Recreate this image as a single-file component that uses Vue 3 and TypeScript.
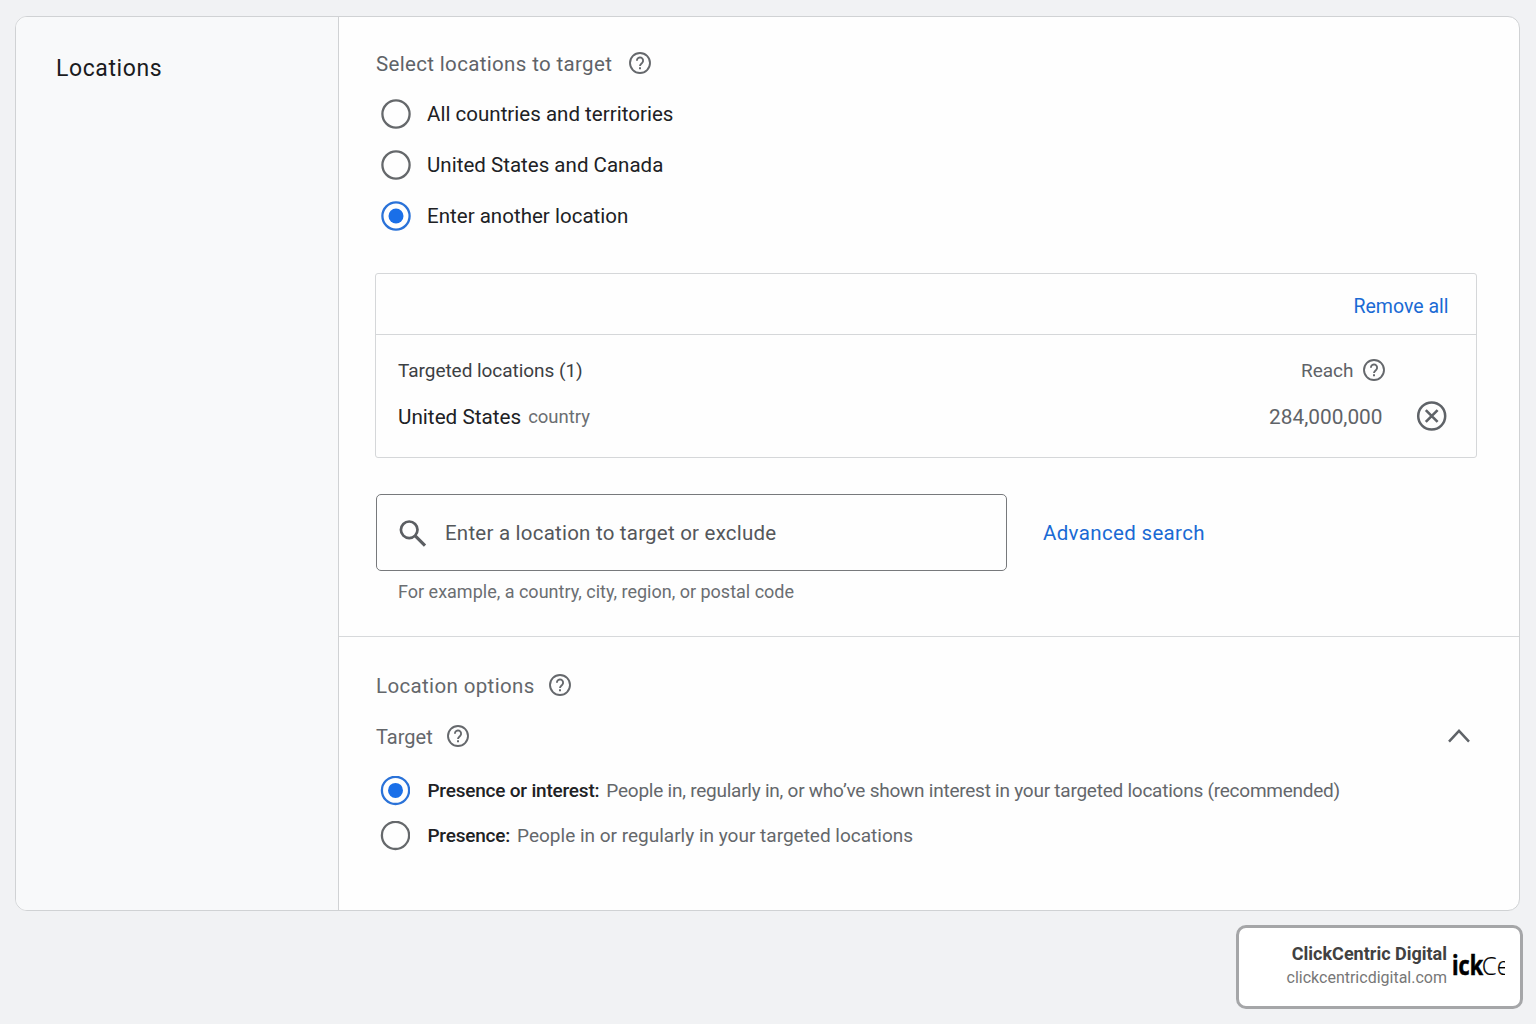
<script setup lang="ts">
import { defineComponent, h, ref } from 'vue'

interface Place { id: string; label: string }
interface Mode { id: string; title: string; text: string; cls: string }

const places: Place[] = [
  { id: 'all', label: 'All countries and territories' },
  { id: 'usca', label: 'United States and Canada' },
  { id: 'other', label: 'Enter another location' },
]
const modes: Mode[] = [
  {
    id: 'interest',
    title: 'Presence or interest:',
    text: 'People in, regularly in, or who’ve shown interest in your targeted locations (recommended)',
    cls: 'm-interest',
  },
  { id: 'presence', title: 'Presence:', text: 'People in or regularly in your targeted locations', cls: 'm-presence' },
]
const place = ref('other')
const mode = ref('interest')

const HelpIcon = defineComponent({
  render: () =>
    h('svg', { width: 24, height: 24, viewBox: '0 0 24 24', fill: 'none', stroke: '#65686c', 'stroke-width': 1.9 }, [
      h('circle', { cx: 12, cy: 12, r: 10 }),
      h('path', { d: 'M8.9 9.7a3.1 3.1 0 1 1 5.3 2.1c-1 1-2.2 1.5-2.2 3.3' }),
      h('path', { d: 'M12 16.3v2', 'stroke-width': 2 }),
    ]),
})
</script>

<template>
  <div class="page">
    <main class="card">
      <aside class="side"><h1>Locations</h1></aside>
      <div class="content">
        <section class="targeting">
          <div class="row heading"><span class="t-select">Select locations to target</span><HelpIcon class="help" /></div>
          <div class="places">
            <label v-for="p in places" :key="p.id" class="row option" @click="place = p.id">
              <svg class="radio" :class="{ on: place === p.id }" width="30" height="30" viewBox="0 0 30 30">
                <circle class="ring" cx="15" cy="15" r="13.6" />
                <circle v-if="place === p.id" class="dot" cx="15" cy="15" r="7.5" />
              </svg>
              <span>{{ p.label }}</span>
            </label>
          </div>

          <div class="table">
            <div class="table-top"><a class="t-remove">Remove all</a></div>
            <div class="table-body">
              <div class="row line">
                <span class="t-targeted">Targeted locations (1)</span>
                <span class="reach"><span class="t-reach">Reach</span><HelpIcon class="help" /></span>
              </div>
              <div class="row line">
                <span class="t-us">United States</span><span class="t-country">country</span>
                <span class="t-num">284,000,000</span>
                <svg class="remove" width="32" height="32" viewBox="0 0 32 32" fill="none" stroke="#5f6368">
                  <circle cx="15.7" cy="16" r="13.5" stroke-width="2.5" />
                  <path d="M9.8 10.1l11.8 11.8M21.6 10.1L9.8 21.9" stroke-width="2.6" />
                </svg>
              </div>
            </div>
          </div>

          <div class="row search-row">
            <div class="row search">
              <svg width="28" height="28" viewBox="0 0 28 28" fill="none" stroke="#5b5e62">
                <circle cx="10.2" cy="10.8" r="8.3" stroke-width="2.7" />
                <path d="M16 16.6l10 10" stroke-width="3.2" />
              </svg>
              <span class="t-search">Enter a location to target or exclude</span>
            </div>
            <a class="t-adv">Advanced search</a>
          </div>
          <div class="hint">For example, a country, city, region, or postal code</div>
        </section>

        <section class="options">
          <div class="row opt-title"><span class="t-options">Location options</span><HelpIcon class="help" /></div>
          <div class="row opt-target">
            <span class="t-target">Target</span><HelpIcon class="help" />
            <svg class="chev" width="24" height="16" viewBox="0 0 24 16" fill="none" stroke="#5f6368" stroke-width="2.5">
              <path d="M2 12.6L12 1.9l10 10.7" />
            </svg>
          </div>
          <div class="modes">
            <label v-for="m in modes" :key="m.id" class="row option" :class="m.cls" @click="mode = m.id">
              <svg class="radio" :class="{ on: mode === m.id }" width="30" height="30" viewBox="0 0 30 30">
                <circle class="ring" cx="15.5" cy="14.4" r="13.6" />
                <circle v-if="mode === m.id" class="dot" cx="15.5" cy="14.4" r="7.5" />
              </svg>
              <b>{{ m.title }}</b><span class="desc">{{ m.text }}</span>
            </label>
          </div>
        </section>
      </div>
    </main>

    <footer class="badge">
      <div class="owner">
        <strong>ClickCentric Digital</strong>
        <span>clickcentricdigital.com</span>
      </div>
      <svg class="logo" width="53" height="34" viewBox="0 0 53 34">
        <text x="0" y="26" class="logo-bold" textLength="31" lengthAdjust="spacingAndGlyphs">ick</text>
        <text x="29.8" y="26" class="logo-light" textLength="28" lengthAdjust="spacingAndGlyphs">Ce</text>
      </svg>
    </footer>
  </div>
</template>

<style>
body { background: #f1f2f4; }
</style>

<style scoped>
.page {
  box-sizing: border-box;
  width: 1536px;
  height: 1024px;
  padding: 16px 0 0 15px;
  overflow: hidden;
  background: #f1f2f4;
  font-family: Roboto, "Liberation Sans", sans-serif;
  font-size: 20px;
  line-height: 24px;
  color: #202124;
  white-space: nowrap;
}
.row { display: flex; align-items: center; }
.card {
  box-sizing: border-box;
  display: flex;
  width: 1505px;
  height: 895px;
  border: 1.5px solid #d0d2d4;
  border-radius: 12px;
  background: #fefefe;
  overflow: hidden;
}
.side {
  box-sizing: border-box;
  width: 323px;
  flex: none;
  padding: 36px 0 0 40px;
  border-right: 1.5px solid #d0d2d4;
  background: #f8f9fa;
}
h1 {
  margin: 0;
  font-size: 23px;
  line-height: 31px;
  font-weight: 400;
  letter-spacing: 0.6px;
  color: #1b1c1e;
}
.content { flex: 1; min-width: 0; }
.targeting {
  box-sizing: border-box;
  height: 620px;
  padding: 31px 42px 0 36px;
  border-bottom: 1px solid #d7d9db;
}
.heading { height: 32px; color: #5f6368; gap: 15.5px; padding-left: 1px; }
.help { flex: none; margin-bottom: 2px; }
.places { margin-top: 8px; font-size: 20.5px; letter-spacing: 0.02px; }
.places .option { height: 51.4px; }
.option { padding-left: 5.5px; cursor: pointer; }
.radio { flex: none; margin-right: 16.5px; fill: none; }
.ring { stroke: #65686b; stroke-width: 2.3px; }
.on .ring { stroke: #2a72d8; }
.dot { fill: #1a6fe8; }
.table {
  box-sizing: border-box;
  height: 185px;
  margin-top: 30.8px;
  border: 1px solid #d5d7d9;
  border-radius: 3px;
}
.table-top {
  box-sizing: border-box;
  display: flex;
  align-items: center;
  justify-content: flex-end;
  height: 61px;
  padding: 6px 27.5px 0 0;
  border-bottom: 1px solid #d5d7d9;
}
a { color: #1a6ad4; }
.line { height: 46px; padding-left: 22px; }
.table-body { padding-top: 13px; }
.reach { display: flex; align-items: center; gap: 8px; margin-left: auto; margin-right: 90.5px; color: #5f6368; }
.t-country { margin-left: 7px; color: #6b6e72; }
.t-num { margin-left: auto; color: #5f6368; }
.remove { margin: 0 28.5px 2px 33px; }
.search-row { margin-top: 36px; }
.search {
  box-sizing: border-box;
  width: 631px;
  height: 77px;
  margin-left: 1px;
  padding: 1px 0 0 22px;
  gap: 18px;
  border: 1.5px solid #77797c;
  border-radius: 5px;
  color: #54575b;
}
.t-adv { margin-left: 36px; padding-top: 1px; }
.hint { margin: 9px 0 0 23px; color: #6b6e72; font-size: 18px; }
.options { padding: 32px 42px 0 37px; color: #64676b; }
.opt-title { height: 34px; gap: 13px; }
.opt-target { height: 34px; margin-top: 17px; gap: 13px; }
.chev { margin-left: auto; margin-right: 6px; }
.modes { margin-top: 15px; }
.modes .option { height: 44.5px; padding-left: 4px; }
.modes .radio { margin-right: 17.4px; }
b { font-weight: 500; color: #202124; margin-right: 7px; }

.t-select { font-size: 20.5px; letter-spacing: 0.34px; }
.t-remove { font-size: 19.5px; }
.t-targeted { font-size: 19px; letter-spacing: -0.04px; color: #3c4043; }
.t-reach { font-size: 19px; }
.t-us { font-size: 20.7px; }
.t-country { font-size: 18.5px; }
.t-num { font-size: 20.8px; }
.t-search { font-size: 20.5px; letter-spacing: 0.22px; }
.t-adv { font-size: 20.5px; letter-spacing: 0.34px; }
.t-options { font-size: 20.5px; letter-spacing: 0.36px; }
.t-target { font-size: 20px; }
.modes b { font-size: 19px; letter-spacing: -0.2px; }
.desc { font-size: 19px; }
.m-interest .desc { letter-spacing: -0.24px; }

.badge {
  box-sizing: border-box;
  display: flex;
  align-items: center;
  justify-content: flex-end;
  width: 287px;
  height: 84px;
  margin: 14px 0 0 1221px;
  padding: 0 15px 2px 0;
  border: 3px solid #a5a6a8;
  border-radius: 10px;
  background: #fff;
}
.owner { display: flex; flex-direction: column; align-items: flex-end; margin-right: 5px; }
.owner strong { font-size: 18px; font-weight: 700; color: #414141; }
.owner span { font-size: 16px; color: #777; }
.logo { overflow: hidden; }
.logo text { font-family: "Open Sans", "Noto Sans", sans-serif; font-size: 26px; fill: #000; }
.logo .logo-bold { font-weight: 700; stroke: #000; stroke-width: 0.6px; }
.logo .logo-light { font-weight: 300; stroke: #000; stroke-width: 0.2px; }
</style>
